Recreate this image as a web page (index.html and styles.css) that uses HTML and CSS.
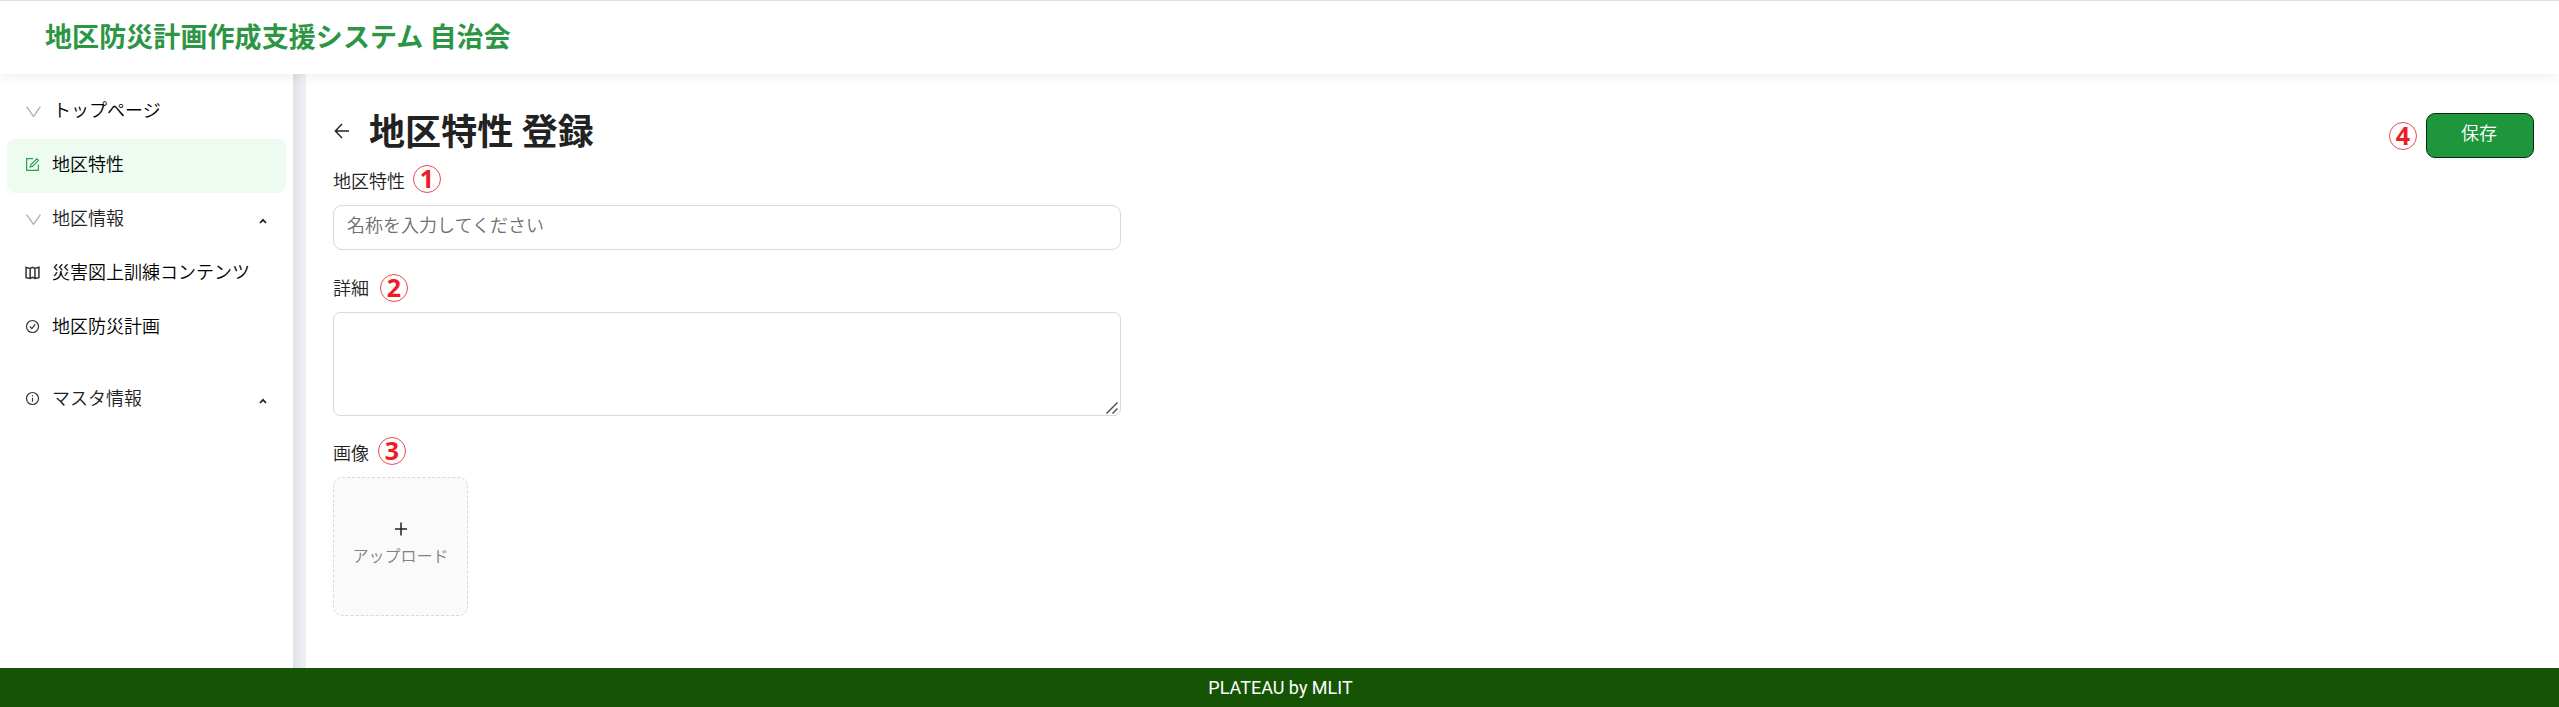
FILE: index.html
```
<!DOCTYPE html>
<html lang="ja">
<head>
<meta charset="utf-8">
<title>地区防災計画作成支援システム</title>
<link rel="stylesheet" href="styles.css">
</head>
<body>
<div class="app">
  <header class="header"><div class="brand">地区防災計画作成支援システム 自治会</div></header>
  <div class="body">
    <nav class="sidebar">
      <a class="item item-top"><svg class="chev" viewBox="0 0 16 16"><path d="M1.500 3.500 8 12.500l6.500-9"/></svg><span>トップページ</span></a>
      <a class="item active"><svg class="icon" viewBox="0 0 14 14"><path d="M7.500 1.500H1.500v11h11V7M4.800 9.300l.5-2L11 1.600l1.600 1.500L7 8.800z"/></svg><span>地区特性</span></a>
      <a class="item group"><svg class="chev" viewBox="0 0 16 16"><path d="M1.500 3.500 8 12.500l6.500-9"/></svg><span>地区情報</span><svg class="caret" viewBox="0 0 8 6"><path d="M1 5 4 1.800 7 5"/></svg></a>
      <a class="item"><svg class="icon icon-map" viewBox="0 0 14 14"><path d="M1 2.200 4.800 3.300 7 2.200 9.300 3.300 13 2.200V11.800L9.300 12.600 7 11.500 4.800 12.600 1 11.800zM4.800 3.300v9.300M9.300 3.300v9.300"/></svg><span>災害図上訓練コンテンツ</span></a>
      <a class="item"><svg class="icon" viewBox="0 0 14 14"><circle cx="7" cy="7" r="5.600"/><path d="m4.600 7 1.800 1.900 3.100-3.900"/></svg><span>地区防災計画</span></a>
      <a class="item group spaced"><svg class="icon" viewBox="0 0 14 14"><circle cx="7" cy="7" r="5.600"/><path d="M7 6.200v3.900M7 3.800v1.200"/></svg><span>マスタ情報</span><svg class="caret" viewBox="0 0 8 6"><path d="M1 5 4 1.800 7 5"/></svg></a>
    </nav>
    <div class="gutter"></div>
    <main class="main">
      <div class="title-row">
        <svg class="back" viewBox="0 0 16 16"><path d="M15 8H1.500M8 1 1.300 8 8 15"/></svg>
        <h1 class="title">地区特性 登録</h1>
        <span class="mark mark-save">4</span>
        <button class="save">保存</button>
      </div>
      <div class="label label-name"><span>地区特性</span><span class="mark">1</span></div>
      <input class="input" type="text" placeholder="名称を入力してください">
      <div class="label label-detail"><span>詳細</span><span class="mark">2</span></div>
      <div class="textarea"><svg class="grip" viewBox="0 0 12 12"><path d="M.5 11.500 11.500.5M6.500 11.500l5-5"/></svg></div>
      <div class="label label-image"><span>画像</span><span class="mark">3</span></div>
      <div class="upload"><svg class="plus" viewBox="0 0 14 14"><path d="M7 .5v13M1 7h12"/></svg><span>アップロード</span></div>
    </main>
  </div>
  <footer class="footer">PLATEAU by MLIT</footer>
</div>
</body>
</html>
```
FILE: styles.css
```
* { box-sizing: border-box; }
body {
  margin: 0;
  font-family: "Noto Sans CJK JP", sans-serif;
  font-size: 18px;
  font-weight: 350;
  color: #222;
  background: #fff;
}
svg { fill: none; stroke: currentColor; flex: none; display: block; }
.app { height: 707px; display: flex; flex-direction: column; overflow: hidden; }
.header {
  height: 74px;
  flex: none;
  border-top: 1px solid #dedede;
  padding: 0 45px;
  display: flex;
  align-items: center;
  position: relative;
  background: #fff;
  box-shadow: 0 2px 12px rgba(0, 0, 0, .07);
}
.brand { font-size: 27px; font-weight: 700; color: #2d9644; line-height: 40px; margin-bottom: 3px; letter-spacing: .08px; white-space: nowrap; }
.body { flex: 1; display: flex; min-height: 0; }
.sidebar { width: 293px; flex: none; padding: 11px 7px 0; display: flex; flex-direction: column; }
.item {
  height: 54px;
  flex: none;
  padding: 0 18px;
  border-radius: 8px;
  display: flex;
  align-items: center;
  gap: 12px;
  color: #000;
  line-height: 48px;
  white-space: nowrap;
}
.item span { height: 54px; }
.item-top { gap: 13px; }
.group { color: #222; }
.active { background: #edfbf1; }
.spaced { margin-top: 18px; }
.icon { width: 15px; height: 15px; margin-top: -3px; stroke-width: 1.1; color: #333; }
.icon-map { stroke-width: 1.4; }
.active .icon { color: #2fa052; }
.chev { width: 17px; height: 17px; stroke-width: 1.3; color: #b0b0b0; margin-right: -2px; margin-top: -2px; }
.caret { width: 8px; height: 6px; stroke-width: 1.8; margin-left: auto; margin-top: 2px; margin-right: 1px; }
.gutter { width: 13px; flex: none; background: linear-gradient(90deg, #dfe0e5, #eaebf0 50%, #eff0f5); }
.main { flex: 1; padding: 39px 25px 0 27px; display: flex; flex-direction: column; align-items: flex-start; }
.title-row { height: 44px; width: 100%; display: flex; align-items: center; }
.back { width: 16px; height: 16px; stroke-width: 1.4; margin: -8px 19px 0 1px; }
.title { margin: -13px 0 0; font-size: 36px; font-weight: 700; line-height: 44px; letter-spacing: .1px; }
.save {
  width: 108px;
  height: 45px;
  margin: 1px 0 0 9px;
  padding: 0 2px 7px 0;
  border: 1px solid #062b0e;
  border-radius: 9px;
  background: #1e963b;
  color: #fff;
  font: inherit;
  box-shadow: 0 2px 0 rgba(0, 0, 0, .03);
}
.mark {
  width: 28px;
  height: 28px;
  flex: none;
  border: 1px solid #f04650;
  border-radius: 50%;
  color: #ee1c25;
  font: 700 25px/25px "Noto Sans", sans-serif;
  text-align: center;
}
.mark-save { margin-left: auto; margin-top: 2px; }
.label { height: 28px; display: flex; align-items: center; line-height: 28px; }
.label-name { margin-top: 8px; }
.label-name .mark { margin-left: 8px; }
.label-name span:first-child { margin-top: 1px; }
.label-detail { margin-top: 24px; }
.label-detail .mark { margin-left: 11px; }
.label-detail span:first-child { margin-top: -2px; }
.label-image { margin-top: 21px; }
.label-image .mark { margin-left: 9px; }
.label-image span:first-child { margin-top: 1px; }
.input {
  width: 788px;
  height: 45px;
  margin-top: 12px;
  padding: 0 13px 7px;
  border: 1px solid #d9d9d9;
  border-radius: 9px;
  font: inherit;
}
.input::placeholder { color: #707070; }
.textarea {
  width: 788px;
  height: 104px;
  margin-top: 10px;
  border: 1px solid #d9d9d9;
  border-radius: 7px;
  padding: 0 2px 1px 0;
  display: flex;
  justify-content: flex-end;
  align-items: flex-end;
}
.grip { width: 12px; height: 12px; color: #555; stroke-width: 1.5; }
.upload {
  width: 135px;
  height: 139px;
  margin-top: 12px;
  border: 1px dashed #d9d9d9;
  border-radius: 9px;
  background: #fafafa;
  display: flex;
  flex-direction: column;
  align-items: center;
  padding-top: 44px;
  font-size: 16px;
  line-height: 24px;
  color: #808080;
}
.plus { width: 14px; height: 14px; stroke-width: 1.5; color: #222; margin-bottom: 7px; }
.footer {
  height: 39px;
  flex: none;
  background: #155404;
  color: #fff;
  font-family: Roboto, sans-serif;
  font-weight: 400;
  line-height: 39px;
  text-align: center;
  padding-left: 2px;
}
```
